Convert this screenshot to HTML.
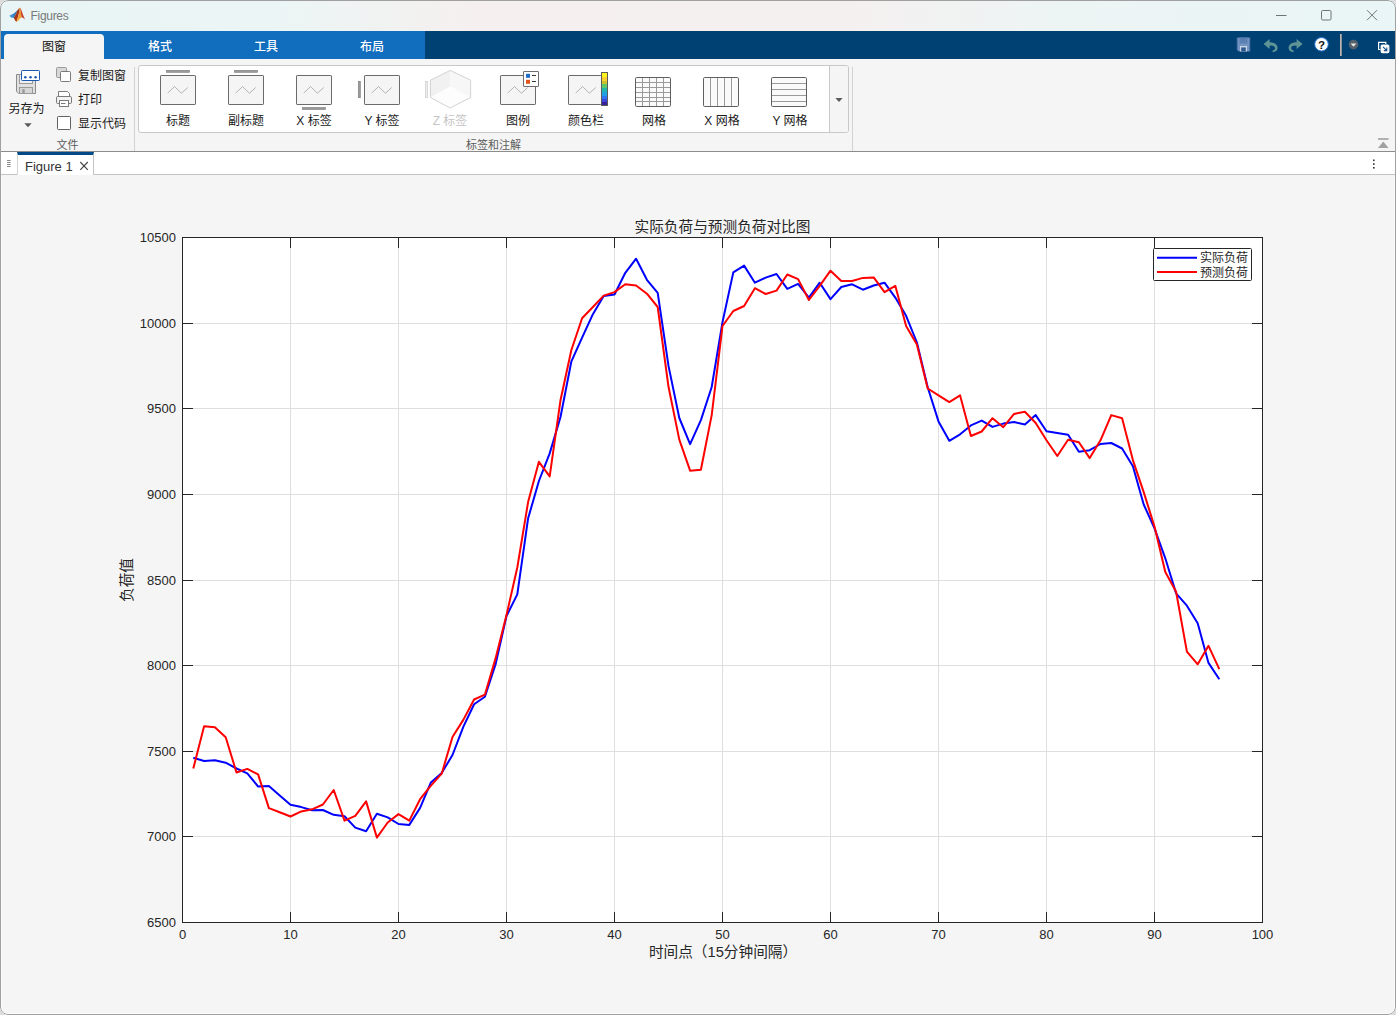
<!DOCTYPE html>
<html lang="zh-CN">
<head>
<meta charset="utf-8">
<title>Figures</title>
<style>
*{box-sizing:border-box;margin:0;padding:0}
html,body{width:1396px;height:1015px;overflow:hidden;background:#dcdcdc}
body{font-family:"Liberation Sans","Noto Sans CJK SC",sans-serif;font-size:12px;color:#1a1a1a;position:relative}
.win{position:absolute;left:0;top:0;width:1396px;height:1015px;border-radius:8px;overflow:hidden;background:#f5f5f5}
.winborder{position:absolute;left:0;top:0;width:1396px;height:1015px;border-radius:8px;border:1px solid #a0a0a0;pointer-events:none}
.abs{position:absolute}
.titlebar{position:absolute;left:0;top:0;width:1396px;height:31px;background:linear-gradient(90deg,#e8f4f5 0%,#ecf5f5 20%,#f5f0ef 34%,#f5f0f0 60%,#edf4f4 76%,#e9f5f6 100%)}
.title{position:absolute;left:30.5px;top:8px;letter-spacing:-0.3px;font-size:12px;color:#7a7a7a;line-height:16px;font-family:"Liberation Sans",sans-serif}
.tabbar{position:absolute;left:0;top:31px;width:1396px;height:28px;background:#004173}
.tabbar .light{position:absolute;left:0;top:0;width:425px;height:28px;background:#116dbd}
.tab{position:absolute;top:3px;height:25px;width:100px;text-align:center;line-height:26px;color:#fff;font-size:12px;font-weight:500}
.tab.active{background:#f5f5f5;color:#111;font-weight:400;border-radius:4px 4px 0 0}
.strip{position:absolute;left:0;top:59px;width:1396px;height:92px;background:#f5f5f5}
.stripline{position:absolute;left:0;top:151px;width:1396px;height:1px;background:#8c8c8c}
.lbl{position:absolute;white-space:nowrap;font-size:12px;line-height:14px;color:#1a1a1a}
.lbl.c{transform:translateX(-50%)}
.sec{color:#5c5c5c;font-size:11px}
.vsep{position:absolute;width:1px;background:#d2d2d2}
.gallery{position:absolute;left:138px;top:65px;width:711px;height:68px;background:#fff;border:1px solid #c8c8c8;border-radius:3px}
.gdrop{position:absolute;left:829px;top:66px;width:19px;height:66px;background:#f5f5f5;border-left:1px solid #c8c8c8;border-radius:0 2px 2px 0}
.docbar{position:absolute;left:0;top:152px;width:1396px;height:23px;background:#fff;border-bottom:1px solid #c4c4c4}
.doctab{position:absolute;left:17px;top:152px;width:77px;height:23px;background:#fff;border-top:3px solid #004b87;border-left:1px solid #d4d4d4;border-right:1px solid #c4c4c4}
.plot{position:absolute;left:0;top:0}
svg.ic{position:absolute;left:0;top:0;width:1396px;height:180px;overflow:visible}
</style>
</head>
<body>
<div class="win">
  <div class="titlebar"></div>
  <div class="title">Figures</div>

  <div class="tabbar">
    <div class="light"></div>
    <div class="tab active" style="left:4px">图窗</div>
    <div class="tab" style="left:110px">格式</div>
    <div class="tab" style="left:216px">工具</div>
    <div class="tab" style="left:322px">布局</div>
  </div>

  <div class="strip"></div>
  <div class="stripline"></div>

  <!-- file section -->
  <div class="lbl c" style="left:26.5px;top:102px">另存为</div>
  <div class="lbl" style="left:78px;top:69px">复制图窗</div>
  <div class="lbl" style="left:78px;top:93px">打印</div>
  <div class="lbl" style="left:78px;top:117px">显示代码</div>
  <div class="lbl c sec" style="left:67.5px;top:138px">文件</div>
  <div class="vsep" style="left:134px;top:67px;height:84px"></div>

  <!-- gallery -->
  <div class="gallery"></div>
  <div class="gdrop"></div>
  <div class="lbl c" style="left:178px;top:113.5px">标题</div>
  <div class="lbl c" style="left:246px;top:113.5px">副标题</div>
  <div class="lbl c" style="left:314px;top:113.5px">X 标签</div>
  <div class="lbl c" style="left:382px;top:113.5px">Y 标签</div>
  <div class="lbl c" style="left:450px;top:113.5px;color:#c4c4c4">Z 标签</div>
  <div class="lbl c" style="left:518px;top:113.5px">图例</div>
  <div class="lbl c" style="left:586px;top:113.5px">颜色栏</div>
  <div class="lbl c" style="left:654px;top:113.5px">网格</div>
  <div class="lbl c" style="left:722px;top:113.5px">X 网格</div>
  <div class="lbl c" style="left:790px;top:113.5px">Y 网格</div>
  <div class="lbl c sec" style="left:493.5px;top:138px">标签和注解</div>
  <div class="vsep" style="left:852px;top:67px;height:84px"></div>

  <!-- document bar -->
  <div class="docbar"></div>
  <div class="doctab"></div>
  <div class="lbl" style="left:25px;top:159px;font-size:13px;line-height:15px;color:#333;font-family:'Liberation Sans',sans-serif">Figure 1</div>

  <svg class="plot" width="1396" height="1015" viewBox="0 0 1396 1015">
<rect x="182.5" y="237.5" width="1080.0" height="685.0" fill="#fff"/>
<path d="M290.5 237.5V922.5M398.5 237.5V922.5M506.5 237.5V922.5M614.5 237.5V922.5M722.5 237.5V922.5M830.5 237.5V922.5M938.5 237.5V922.5M1046.5 237.5V922.5M1154.5 237.5V922.5M182.5 836.5H1262.5M182.5 751.5H1262.5M182.5 665.5H1262.5M182.5 580.5H1262.5M182.5 494.5H1262.5M182.5 408.5H1262.5M182.5 323.5H1262.5" stroke="#dfdfdf" stroke-width="1" fill="none"/>
<polyline points="193.3,757.8 204.1,761.0 214.9,760.3 225.7,762.7 236.5,768.5 247.3,773.3 258.1,786.5 268.9,786.0 279.7,795.4 290.5,804.7 301.3,807.1 312.1,810.2 322.9,810.0 333.7,814.8 344.5,816.2 355.3,827.6 366.1,831.2 376.9,813.8 387.7,817.4 398.5,824.0 409.3,824.9 420.1,807.9 430.9,782.4 441.7,773.0 452.5,755.0 463.3,726.9 474.1,704.3 484.9,696.8 495.7,663.9 506.5,616.1 517.3,594.4 528.1,518.4 538.9,481.0 549.7,453.4 560.5,417.0 571.3,361.7 582.1,337.7 592.9,314.2 603.7,296.1 614.5,294.5 625.3,272.8 636.1,258.7 646.9,279.8 657.7,292.8 668.5,365.9 679.3,418.0 690.1,444.2 700.9,420.1 711.7,387.0 722.5,322.1 733.3,272.4 744.1,265.6 754.9,282.7 765.7,277.6 776.5,274.0 787.3,288.9 798.1,283.9 808.9,297.6 819.7,282.7 830.5,299.1 841.3,287.0 852.1,284.3 862.9,289.7 873.7,285.5 884.5,282.7 895.3,297.6 906.1,315.8 916.9,342.5 927.7,387.3 938.5,421.4 949.3,440.8 960.1,434.3 970.9,425.4 981.7,420.6 992.5,426.9 1003.3,423.6 1014.1,422.1 1024.9,424.5 1035.7,415.1 1046.5,431.2 1057.3,432.9 1068.1,434.8 1078.9,451.7 1089.7,450.2 1100.5,444.0 1111.3,443.0 1122.1,448.5 1132.9,466.3 1143.7,504.5 1154.5,528.3 1165.3,558.3 1176.1,593.4 1186.9,605.7 1197.7,623.3 1208.5,662.9 1219.3,679.3" fill="none" stroke="#0000ff" stroke-width="2" stroke-linejoin="round"/>
<polyline points="193.3,768.5 204.1,726.2 214.9,727.3 225.7,737.2 236.5,772.5 247.3,768.9 258.1,774.4 268.9,808.1 279.7,812.2 290.5,816.5 301.3,811.4 312.1,809.3 322.9,804.5 333.7,790.0 344.5,820.6 355.3,815.8 366.1,801.4 376.9,837.6 387.7,822.5 398.5,814.1 409.3,820.6 420.1,799.2 430.9,785.7 441.7,773.7 452.5,737.0 463.3,719.9 474.1,699.5 484.9,694.7 495.7,657.9 506.5,615.1 517.3,567.5 528.1,502.1 538.9,461.8 549.7,476.4 560.5,400.2 571.3,350.2 582.1,318.2 592.9,307.0 603.7,295.6 614.5,292.1 625.3,284.3 636.1,285.5 646.9,293.7 657.7,307.0 668.5,386.8 679.3,439.6 690.1,470.7 700.9,469.7 711.7,415.1 722.5,326.0 733.3,311.0 744.1,306.0 754.9,288.2 765.7,294.0 776.5,290.6 787.3,274.5 798.1,279.1 808.9,300.0 819.7,285.8 830.5,270.7 841.3,281.0 852.1,281.0 862.9,277.9 873.7,277.4 884.5,292.1 895.3,285.8 906.1,326.0 916.9,344.5 927.7,388.5 938.5,395.4 949.3,402.1 960.1,395.4 970.9,436.0 981.7,431.5 992.5,418.2 1003.3,427.2 1014.1,413.9 1024.9,411.8 1035.7,423.0 1046.5,440.3 1057.3,456.0 1068.1,439.7 1078.9,442.3 1089.7,458.1 1100.5,440.3 1111.3,415.1 1122.1,418.2 1132.9,460.1 1143.7,492.1 1154.5,526.6 1165.3,572.1 1176.1,591.8 1186.9,651.6 1197.7,664.3 1208.5,645.8 1219.3,669.2" fill="none" stroke="#ff0000" stroke-width="2" stroke-linejoin="round"/>
<path d="M290.5 922.5v-10.5M290.5 237.5v10.5M398.5 922.5v-10.5M398.5 237.5v10.5M506.5 922.5v-10.5M506.5 237.5v10.5M614.5 922.5v-10.5M614.5 237.5v10.5M722.5 922.5v-10.5M722.5 237.5v10.5M830.5 922.5v-10.5M830.5 237.5v10.5M938.5 922.5v-10.5M938.5 237.5v10.5M1046.5 922.5v-10.5M1046.5 237.5v10.5M1154.5 922.5v-10.5M1154.5 237.5v10.5M182.5 836.5h10.5M1262.5 836.5h-10.5M182.5 751.5h10.5M1262.5 751.5h-10.5M182.5 665.5h10.5M1262.5 665.5h-10.5M182.5 580.5h10.5M1262.5 580.5h-10.5M182.5 494.5h10.5M1262.5 494.5h-10.5M182.5 408.5h10.5M1262.5 408.5h-10.5M182.5 323.5h10.5M1262.5 323.5h-10.5" stroke="#262626" stroke-width="1" fill="none"/>
<rect x="182.5" y="237.5" width="1080.0" height="685.0" fill="none" stroke="#262626" stroke-width="1"/>
<g font-family="'Liberation Sans', sans-serif" font-size="13" fill="#262626">
<text x="182.5" y="939" text-anchor="middle">0</text>
<text x="290.5" y="939" text-anchor="middle">10</text>
<text x="398.5" y="939" text-anchor="middle">20</text>
<text x="506.5" y="939" text-anchor="middle">30</text>
<text x="614.5" y="939" text-anchor="middle">40</text>
<text x="722.5" y="939" text-anchor="middle">50</text>
<text x="830.5" y="939" text-anchor="middle">60</text>
<text x="938.5" y="939" text-anchor="middle">70</text>
<text x="1046.5" y="939" text-anchor="middle">80</text>
<text x="1154.5" y="939" text-anchor="middle">90</text>
<text x="1262.5" y="939" text-anchor="middle">100</text>
<text x="176" y="926.8" text-anchor="end">6500</text>
<text x="176" y="840.8" text-anchor="end">7000</text>
<text x="176" y="755.8" text-anchor="end">7500</text>
<text x="176" y="669.8" text-anchor="end">8000</text>
<text x="176" y="584.8" text-anchor="end">8500</text>
<text x="176" y="498.8" text-anchor="end">9000</text>
<text x="176" y="412.8" text-anchor="end">9500</text>
<text x="176" y="327.8" text-anchor="end">10000</text>
<text x="176" y="241.8" text-anchor="end">10500</text>
</g>
<g font-family="'Liberation Sans', 'Noto Sans CJK SC', sans-serif" fill="#262626">
<text x="722.5" y="232" text-anchor="middle" font-size="14.67">实际负荷与预测负荷对比图</text>
<text x="723" y="957" text-anchor="middle" font-size="14.67">时间点（15分钟间隔）</text>
<text transform="translate(132,580) rotate(-90)" text-anchor="middle" font-size="14.67">负荷值</text>
</g>
<rect x="1153.5" y="248.5" width="98" height="32" fill="#fff" stroke="#262626" stroke-width="1" rx="1"/>
<path d="M1157 257.8h40" stroke="#0000ff" stroke-width="2"/>
<path d="M1157 272h40" stroke="#ff0000" stroke-width="2"/>
<g font-family="'Liberation Sans', 'Noto Sans CJK SC', sans-serif" font-size="12" fill="#262626">
<text x="1200" y="262.4">实际负荷</text>
<text x="1200" y="276.6">预测负荷</text>
</g>
</svg>

  <!-- icons -->
  <svg class="ic" viewBox="0 0 1396 180">
    <!-- MATLAB logo -->
<defs>
  <linearGradient id="lgb" x1="0" y1="0" x2="1" y2="0"><stop offset="0" stop-color="#4aa3e2"/><stop offset="1" stop-color="#2a62a8"/></linearGradient>
  <linearGradient id="lgm" x1="0" y1="0" x2="1" y2="1"><stop offset="0" stop-color="#7a1a10"/><stop offset="1" stop-color="#d4501c"/></linearGradient>
  <linearGradient id="lgo" x1="0" y1="0" x2="0" y2="1"><stop offset="0" stop-color="#e07a28"/><stop offset="0.5" stop-color="#f09a34"/><stop offset="1" stop-color="#f4b428"/></linearGradient>
</defs>
<g>
  <path d="M9.3 15.7L14.2 13.2L17.5 10.2L16 14L14.6 16.6L14 18L11 17.6Z" fill="url(#lgb)"/>
  <path d="M14 18L14.6 16.6L16 14L17.5 10.2L19.3 7.9L19.7 10L18.6 15L16.5 22.1L15.3 20.8L14.3 19Z" fill="url(#lgm)"/>
  <path d="M19.3 7.9L19.8 7.7L20.6 8L21 13L21.5 17.3L20 18.5L18.5 20.5L16.5 22.1L18.6 15L19.7 10Z" fill="url(#lgo)"/>
  <path d="M20.6 8L22 12L23.5 16L25 19.4L23 17.8L21.5 17.3L21 13Z" fill="#c53a1e"/>
</g>
<!-- window controls -->
<g stroke="#6f7476" stroke-width="1" fill="none">
  <path d="M1276 15.5h10.5"/>
  <rect x="1321.5" y="10.5" width="9.5" height="9.5" rx="1.2"/>
  <path d="M1367 10.2l10 10M1377 10.2l-10 10"/>
</g>
<!-- quick access: save -->
<g>
  <path d="M1237 37.5h13v14h-11.2l-1.8-1.8z" fill="#7395c2" stroke="#2f5a92" stroke-width="1"/>
  <rect x="1239.5" y="37.5" width="8" height="6" fill="#5a80b2"/>
  <rect x="1240" y="46" width="7" height="5.5" fill="#c9d6e6"/>
  <rect x="1241.2" y="47.4" width="4.6" height="4.1" fill="#2f5a92"/>
</g>
<!-- undo -->
<path d="M1263.6 44 L1269.6 39 V42.3 C1274.6 42.3 1277.6 44.6 1277.6 48 C1277.6 50.4 1275.6 52 1272.6 52.2 V50.4 C1274.4 50 1275 49.2 1275 48 C1275 46.4 1273.4 45.6 1269.6 45.6 V49 Z" fill="#5e9496"/>
<!-- redo -->
<path d="M1302.6 44 L1296.6 39 V42.3 C1291.6 42.3 1288.6 44.6 1288.6 48 C1288.6 50.4 1290.6 52 1293.6 52.2 V50.4 C1291.8 50 1291.2 49.2 1291.2 48 C1291.2 46.4 1292.8 45.6 1296.6 45.6 V49 Z" fill="#5e9496"/>
<!-- help -->
<circle cx="1321.5" cy="44.3" r="6.8" fill="#fff" stroke="#1e6fd0" stroke-width="1"/>
<text x="1321.5" y="48.6" text-anchor="middle" font-family="'Liberation Sans',sans-serif" font-weight="bold" font-size="11.5" fill="#111">?</text>
<rect x="1340" y="34" width="1.7" height="22" fill="#bfb5ae"/>
<circle cx="1353.5" cy="44.6" r="4.8" fill="#56606b"/>
<path d="M1350.6 43.4h5.8l-2.9 3.4z" fill="#e8e8e8"/>
<!-- popout -->
<g fill="none" stroke="#fff" stroke-width="1.2">
  <path d="M1380.4 49.5h-1.8v-7.2h7.2v1.8"/>
  <rect x="1381.2" y="45" width="7.6" height="7.6" rx="1" fill="#fff"/>
</g>
<path d="M1383 46.8l3.6 3.6M1386.8 47.6v3h-3" stroke="#1a4f8a" stroke-width="1.1" fill="none"/>

<!-- Save As -->
<g>
  <path d="M16.5 74.5h19v19h-16.8l-2.2-2.2z" fill="#e0e0e0" stroke="#8a8a8a" stroke-width="1"/>
  <rect x="19.5" y="74.5" width="13" height="9" fill="#f0f0f0" stroke="#9a9a9a" stroke-width="1"/>
  <rect x="19.5" y="87.5" width="13" height="6" fill="#d6d6d6" stroke="#9a9a9a" stroke-width="1"/>
  <rect x="22.3" y="89.2" width="2.4" height="4.3" fill="#9a9a9a"/>
  <rect x="21.5" y="70.5" width="18" height="10" rx="0.8" fill="#fff" stroke="#1b59b3" stroke-width="1"/>
  <circle cx="25.3" cy="77.3" r="1.25" fill="#1b59b3"/>
  <circle cx="30.5" cy="77.3" r="1.25" fill="#1b59b3"/>
  <circle cx="35.6" cy="77.3" r="1.25" fill="#1b59b3"/>
</g>
<path d="M24.3 123.2h7.4l-3.7 4z" fill="#5a5a5a"/>
<!-- copy -->
<rect x="56.5" y="67.5" width="10" height="10" rx="1" fill="#d8d8d8" stroke="#9a9a9a"/>
<rect x="60.5" y="71.5" width="10" height="10" rx="1" fill="#fff" stroke="#7a7a7a"/>
<!-- print -->
<g stroke="#7a7a7a" stroke-width="1" fill="#fff">
  <path d="M58.5 96.5v-5h9l2 2v3"/>
  <rect x="56.5" y="96.5" width="15" height="7" rx="1.2" fill="#f2f2f2"/>
  <rect x="59.5" y="100.5" width="9" height="6"/>
  <path d="M61 103.5h4.5" />
</g>
<!-- checkbox -->
<rect x="57.5" y="116.5" width="13" height="13" rx="0.8" fill="#fff" stroke="#616161"/>

<!-- gallery icons -->
<defs>
  <g id="axbox">
    <rect x="0.5" y="0.5" width="35" height="29" rx="0.6" fill="#f5f5f5" stroke="#6b6b6b"/>
    <path d="M7.7 18L14.6 11.5L21.4 18.3L27.7 12.5" fill="none" stroke="#b4b4b4" stroke-width="1"/>
  </g>
</defs>
<use href="#axbox" x="160" y="75"/>
<rect x="166.5" y="70.3" width="23" height="2" fill="#9a9a9a" stroke="#7a7a7a" stroke-width="0.6"/>
<use href="#axbox" x="228" y="75"/>
<rect x="234.5" y="70.3" width="23" height="2" fill="#9a9a9a" stroke="#7a7a7a" stroke-width="0.6"/>
<use href="#axbox" x="296" y="75"/>
<rect x="302.5" y="107.5" width="23" height="2" fill="#9a9a9a" stroke="#7a7a7a" stroke-width="0.6"/>
<use href="#axbox" x="364" y="75"/>
<rect x="358.3" y="81.3" width="2" height="16.4" fill="#9a9a9a" stroke="#7a7a7a" stroke-width="0.6"/>
<!-- Z label (disabled) -->
<g>
  <path d="M450.2 70.4L430.4 80.2V97.4L450.2 86.4Z" fill="#f1f1f1"/>
  <path d="M450.2 70.4L470.6 80.2V97.4L450.2 86.4Z" fill="#f7f7f7"/>
  <path d="M450.2 86.4L470.6 97.4L450.2 108L430.4 97.4Z" fill="#fdfdfd"/>
  <path d="M450.2 70.4L470.6 80.2V97.4L450.2 108L430.4 97.4V80.2Z" fill="none" stroke="#d2d2d2" stroke-width="1"/>
  <rect x="425.4" y="81.4" width="2.2" height="16.2" fill="#ececec" stroke="#d2d2d2" stroke-width="0.8"/>
</g>
<!-- legend -->
<use href="#axbox" x="500" y="75"/>
<rect x="523.5" y="71.5" width="15" height="15" rx="0.4" fill="#fff" stroke="#6e6e6e"/>
<rect x="526" y="73.8" width="4" height="4" fill="#1f6fc4"/>
<rect x="526" y="79.8" width="4" height="4" fill="#e0561a"/>
<path d="M532 75.5h4M532 81.5h4" stroke="#3a3a3a" stroke-width="1"/>
<!-- colorbar -->
<defs>
  <linearGradient id="cb" x1="0" y1="0" x2="0" y2="1"><stop offset="0.00" stop-color="#fdf51c"/><stop offset="0.14" stop-color="#fdf51c"/><stop offset="0.14" stop-color="#f9cf2e"/><stop offset="0.26" stop-color="#f9cf2e"/><stop offset="0.26" stop-color="#c9c02e"/><stop offset="0.36" stop-color="#c9c02e"/><stop offset="0.36" stop-color="#5cc66a"/><stop offset="0.47" stop-color="#5cc66a"/><stop offset="0.47" stop-color="#1fb6b0"/><stop offset="0.58" stop-color="#1fb6b0"/><stop offset="0.58" stop-color="#22a0e4"/><stop offset="0.70" stop-color="#22a0e4"/><stop offset="0.70" stop-color="#2f74f2"/><stop offset="0.80" stop-color="#2f74f2"/><stop offset="0.80" stop-color="#3b48d8"/><stop offset="0.88" stop-color="#3b48d8"/><stop offset="0.88" stop-color="#3a1f9a"/><stop offset="1.00" stop-color="#3a1f9a"/></linearGradient>
</defs>
<rect x="568.5" y="75.5" width="33" height="29" rx="0.6" fill="#f5f5f5" stroke="#6b6b6b"/>
<path d="M575.7 93L582.6 86.5L589.4 93.3L595.7 87.5" fill="none" stroke="#b4b4b4" stroke-width="1"/>
<rect x="601.5" y="72.5" width="6" height="33" fill="url(#cb)" stroke="#5a5a5a"/>
<!-- grid -->
<g>
  <rect x="635.5" y="77.5" width="35" height="29" rx="1.2" fill="#fafafa" stroke="#5f5f5f"/>
  <path d="M642.5 78v28M649.5 78v28M656.5 78v28M663.5 78v28M636 82.5h34M636 87.5h34M636 92.5h34M636 97.5h34M636 101.5h34" stroke="#9a9a9a" stroke-width="1" fill="none"/>
  <rect x="703.5" y="77.5" width="35" height="29" rx="1.2" fill="#fafafa" stroke="#5f5f5f"/>
  <path d="M710.5 78v28M717.5 78v28M724.5 78v28M731.5 78v28" stroke="#9a9a9a" stroke-width="1" fill="none"/>
  <rect x="771.5" y="77.5" width="35" height="29" rx="1.2" fill="#fafafa" stroke="#5f5f5f"/>
  <path d="M772 83.5h34M772 89.5h34M772 95.5h34M772 101.5h34" stroke="#9a9a9a" stroke-width="1" fill="none"/>
</g>
<path d="M835.4 98h7.2l-3.6 4z" fill="#5a5a5a"/>
<!-- collapse -->
<path d="M1378 139h10.5" stroke="#9a9a9a" stroke-width="1.4"/>
<path d="M1378 148h10.6l-5.3-6.6z" fill="#a2a2a2"/>
<!-- doc bar -->
<g fill="#333"><rect x="1373" y="159.5" width="1.6" height="1.6"/><rect x="1373" y="163.3" width="1.6" height="1.6"/><rect x="1373" y="167" width="1.6" height="1.6"/></g>
<path d="M7 160.5h3.6M7 162.5h3.6M7 164.5h3.6M7 166.5h3.6" stroke="#6a6a6a" stroke-width="0.8"/>
<path d="M80.3 162l7.5 7.8M87.8 162l-7.5 7.8" stroke="#444" stroke-width="1.1" fill="none"/>

  </svg>
  <div style="position:absolute;left:1px;top:176px;width:1394px;height:838px;border:1px solid #fbfbfb;border-top:none;border-radius:0 0 7px 7px;pointer-events:none"></div>
  <div class="winborder"></div>
</div>
</body>
</html>
